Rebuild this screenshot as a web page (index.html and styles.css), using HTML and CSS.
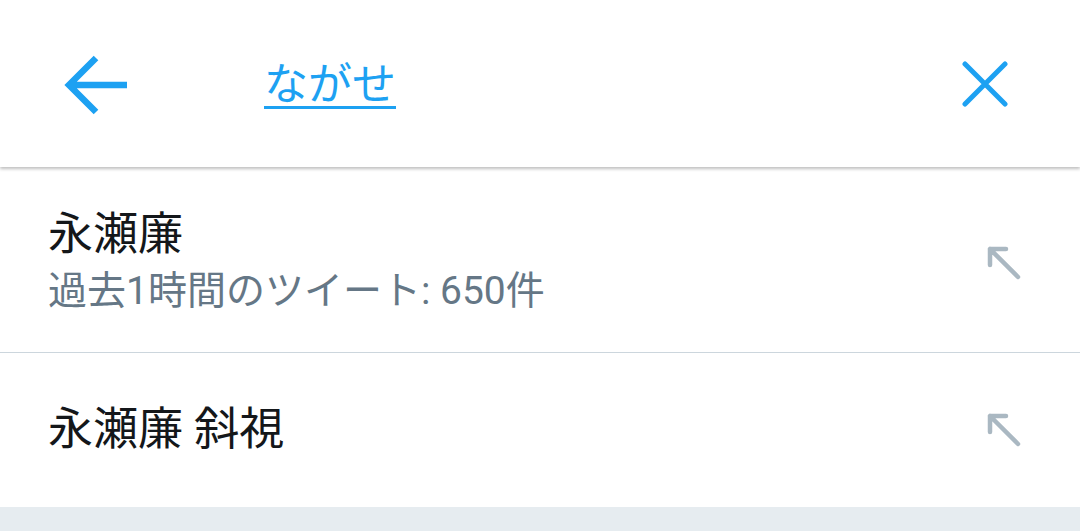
FILE: index.html
```html
<!DOCTYPE html>
<html lang="ja">
<head>
  <meta charset="UTF-8">
  <meta name="viewport" content="width=device-width, initial-scale=1.0">
  <title>検索</title>
  <link rel="stylesheet" href="styles.css">
</head>
<body>
  <div class="search-bar">
    <button class="icon-btn back" aria-label="戻る">
      <svg width="66" height="64" viewBox="0 0 66 64">
        <path d="M64 32H6M33 5L6 32l27 27" fill="none" stroke="#1da1f2" stroke-width="6.5" stroke-linecap="butt" stroke-linejoin="miter"/>
      </svg>
    </button>
    <div class="query">ながせ</div>
    <button class="icon-btn clear" aria-label="クリア">
      <svg width="46" height="46" viewBox="0 0 46 46">
        <path d="M3 3l40 40M43 3L3 43" fill="none" stroke="#1da1f2" stroke-width="5" stroke-linecap="round"/>
      </svg>
    </button>
  </div>

  <ul class="suggestions">
    <li class="suggestion tall">
      <div class="text">
        <div class="title">永瀬廉</div>
        <div class="meta">過去1時間のツイート: 650件</div>
      </div>
      <svg class="fill-arrow" width="36" height="36" viewBox="0 0 36 36">
        <path d="M32 32L4 4M4 20V4h16" fill="none" stroke="#aab8c2" stroke-width="4.5" stroke-linecap="round" stroke-linejoin="round"/>
      </svg>
    </li>
    <li class="suggestion">
      <div class="text">
        <div class="title">永瀬廉 斜視</div>
      </div>
      <svg class="fill-arrow" width="36" height="36" viewBox="0 0 36 36">
        <path d="M32 32L4 4M4 20V4h16" fill="none" stroke="#aab8c2" stroke-width="4.5" stroke-linecap="round" stroke-linejoin="round"/>
      </svg>
    </li>
  </ul>
  <div class="footer-space"></div>
</body>
</html>
```

FILE: styles.css
```css
* { box-sizing: border-box; }
body {
  margin: 0;
  padding: 0;
  background: #fff;
  font-family: Roboto, "Noto Sans CJK JP", sans-serif;
  color: #14171a;
  overflow: hidden;
}
.search-bar {
  height: 167px;
  display: flex;
  align-items: center;
  padding: 0 72px 0 63px;
  background: #fff;
  box-shadow: 0 2px 3px rgba(0,0,0,0.25);
  position: relative;
  z-index: 1;
}
.icon-btn {
  background: none;
  border: 0;
  padding: 0;
  display: flex;
  align-items: center;
}
.back { margin-top: 2px; }
.query {
  flex: 1;
  margin-left: 135px;
  font-size: 44px;
  color: #1da1f2;
  text-decoration: underline;
  text-decoration-thickness: 3px;
  text-underline-offset: 6px;
  line-height: 1;
  margin-top: 2px;
}
.suggestions {
  list-style: none;
  margin: 0;
  padding: 0;
  margin-top: 1px;
}
.suggestion {
  display: flex;
  align-items: center;
  padding: 0 58px 0 48px;
  height: 154px;
}
.suggestion.tall {
  height: 185px;
  border-bottom: 1.5px solid #ccd6dd;
}
.text { flex: 1; }
.title {
  font-size: 45px;
  line-height: 58px;
  color: #14171a;
}
.meta {
  font-size: 39px;
  line-height: 54px;
  color: #657786;
}
.suggestion.tall .text { margin-top: 4px; }
.suggestion.tall .fill-arrow { margin-top: 6px; }
.footer-space {
  height: 40px;
  background: #e6ecf0;
}
```
